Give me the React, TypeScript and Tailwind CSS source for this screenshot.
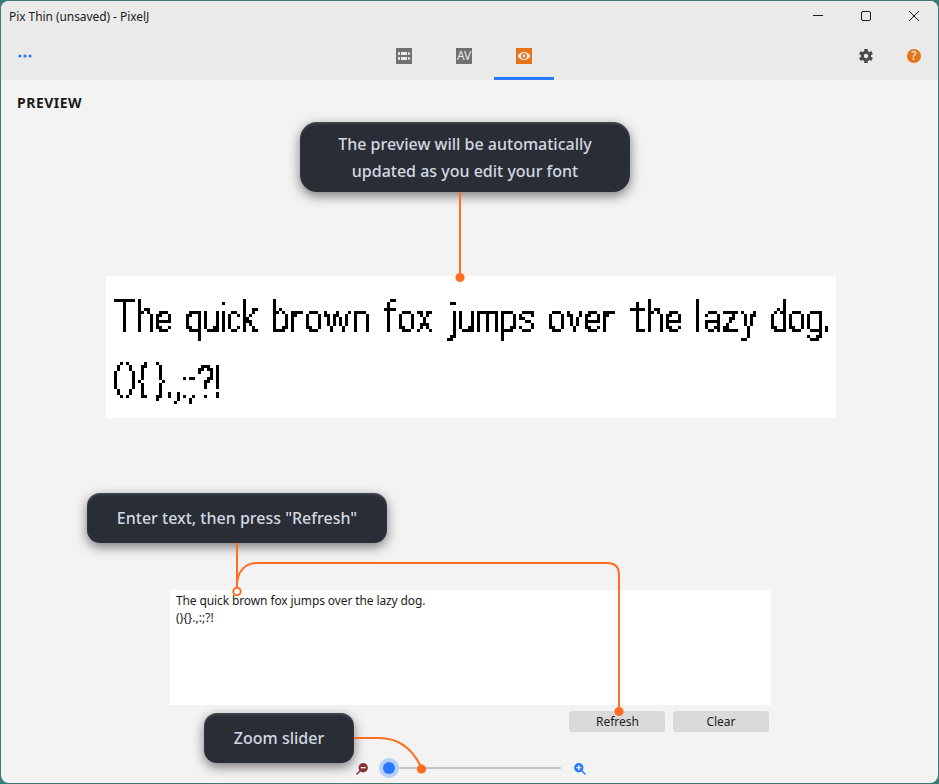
import React from "react";

type Word = { text: string; x: number[] };

const LINES: { y: number; words: Word[] }[] = [
  {
    y: 56,
    words: [
      { text: "The", x: [8, 32, 50] },
      { text: "quick", x: [80, 98, 116, 122, 137] },
      { text: "brown", x: [167, 185, 200, 218, 248] },
      { text: "fox", x: [278, 293, 311] },
      { text: "jumps", x: [341, 353, 371, 395, 413] },
      { text: "over", x: [443, 461, 479, 497] },
      { text: "the", x: [524, 542, 560] },
      { text: "lazy", x: [590, 599, 617, 635] },
      { text: "dog.", x: [665, 683, 701, 719] },
    ],
  },
  {
    y: 122,
    words: [{ text: "(){}.,:;?!", x: [8, 20, 32, 49, 62, 68, 77, 83, 92, 110] }],
  },
];

// Drawn width of each glyph; the others are 15 units wide.
const WIDTH: Record<string, number> = {
  T: 21, i: 3, c: 12, r: 11, w: 27, f: 12, j: 9, m: 21, l: 3, h: 14, n: 14, u: 14,
  "(": 9, ")": 9, "{": 10, "}": 10, ".": 3, ",": 5, ":": 3, ";": 5, "!": 3,
};

// Font size of each glyph; the others are set at 41.
const SIZE: Record<string, number> = {
  T: 46, l: 45, h: 43, b: 43, d: 43, k: 43, f: 44, t: 45, i: 42, j: 42,
  "(": 37, ")": 37, "{": 40, "}": 40, "?": 46, "!": 46, ".": 46, ",": 46, ":": 42, ";": 42,
};

// Baseline shift of the brackets.
const RISE: Record<string, number> = { "(": 7, ")": 7, "{": 5, "}": 5 };

const ruler = document.createElement("canvas").getContext("2d")!;

function fit(ch: string, left: number, baseline: number) {
  const size = SIZE[ch] ?? 41;
  ruler.font = `${size * 10}px Roboto`;
  const m = ruler.measureText(ch);
  const ink = (m.actualBoundingBoxRight + m.actualBoundingBoxLeft) / 10;
  const scale = ((WIDTH[ch] ?? 15) + 0.2) / ink;
  return {
    fontSize: size,
    x: left - 0.1 + (m.actualBoundingBoxLeft / 10) * scale,
    y: baseline - (RISE[ch] ?? 0),
    textLength: (m.width / 10) * scale,
  };
}

function PixelPreview() {
  return (
    <svg className="block h-[142px] w-[730px] bg-white" viewBox="0 0 730 142">
      <defs>
        <filter id="pixels" filterUnits="userSpaceOnUse" x="2" y="2" width="726" height="138" colorInterpolationFilters="sRGB">
          <feComponentTransfer in="SourceGraphic" result="solid">
            <feFuncA type="discrete" tableValues="0 0 1 1 1" />
          </feComponentTransfer>
          <feFlood x="3" y="3" width="1" height="1" floodColor="#000" result="dot" />
          <feOffset in="dot" dx="0" dy="0" x="2" y="2" width="3" height="3" result="cell" />
          <feTile in="cell" result="grid" />
          <feComposite in="solid" in2="grid" operator="in" />
          <feMorphology operator="dilate" radius="1" />
        </filter>
      </defs>
      <g filter="url(#pixels)" className="font-['Roboto',sans-serif]" textRendering="geometricPrecision">
        {LINES.map((line) =>
          line.words.map((word) => (
            <text key={word.text} y={line.y}>
              {word.text.split("").map((ch, i) => (
                <tspan key={i} lengthAdjust="spacingAndGlyphs" {...fit(ch, word.x[i], line.y)}>
                  {ch}
                </tspan>
              ))}
            </text>
          )),
        )}
      </g>
    </svg>
  );
}

function TitleBar() {
  return (
    <div className="flex h-8 shrink-0 items-center justify-between pl-2">
      <span className="text-[12px] leading-4 tracking-[-0.07px] text-[#1b1b1b]">Pix Thin (unsaved) - PixelJ</span>
      <svg width="144" height="32" viewBox="0 0 144 32" fill="none" stroke="#1b1b1b" strokeWidth="1">
        <path d="M19 14.500h10" />
        <rect x="67.500" y="10.500" width="9" height="9" rx="1.500" />
        <path d="M115 10l10 10M125 10l-10 10" />
      </svg>
    </div>
  );
}

function Toolbar() {
  return (
    <div className="grid h-[47px] shrink-0 grid-cols-[373px_180px_1fr]">
      <div className="flex items-center pb-[2px] pl-[17px]">
        <svg width="15" height="4" viewBox="0 0 15 4" fill="#2979ff">
          <circle cx="2" cy="2" r="1.600" />
          <circle cx="7" cy="2" r="1.600" />
          <circle cx="12" cy="2" r="1.600" />
        </svg>
      </div>
      <div className="grid grid-cols-3">
        <div className="flex items-center justify-center pb-[2px]">
          <svg width="16" height="16" viewBox="0 0 16 16">
            <path fill="#707070" d="M0 0h16v16H0z" />
            <path fill="#eaeaea" d="M2 4h2v3H2zM5 4h6v3H5zM12 4l3 1.500L12 7zM2 9h2v3H2zM5 9h6v3H5zM12 9l3 1.500-3 1.500z" />
          </svg>
        </div>
        <div className="flex items-center justify-center pb-[2px]">
          <span className="flex size-4 items-center justify-center bg-[#707070] text-[12px] leading-4 tracking-[-0.3px] text-[#eaeaea]">AV</span>
        </div>
        <div className="flex items-center justify-center border-b-[3px] border-[#2979ff] pt-[1px]">
          <svg width="16" height="16" viewBox="0 0 16 16">
            <path fill="#e77518" d="M0 0h16v16H0z" />
            <path fill="#eaeaea" d="M1.500 8C3 5.300 5.300 4 8 4s5 1.300 6.500 4c-1.500 2.700-3.800 4-6.500 4S3 10.700 1.500 8z" />
            <circle cx="8" cy="8" r="2.200" fill="#eaeaea" stroke="#e77518" strokeWidth="1.600" />
          </svg>
        </div>
      </div>
      <div className="flex items-center justify-end gap-[33px] pb-[2px] pr-[17px]">
        <svg width="16" height="16" viewBox="0 0 16 16">
          <g fill="#4c4c4f">
            <path d="M6.200 1h3.600v14H6.200z" />
            <path d="M6.200 1h3.600v14H6.200z" transform="rotate(60 8 8)" />
            <path d="M6.200 1h3.600v14H6.200z" transform="rotate(120 8 8)" />
            <circle cx="8" cy="8" r="5.200" />
          </g>
          <circle cx="8" cy="8" r="2.200" fill="#eaeaea" />
        </svg>
        <span className="flex size-[14px] items-center justify-center rounded-full bg-[#e77518] text-[12px] leading-[14px] font-medium text-[#eaeaea]">?</span>
      </div>
    </div>
  );
}

function ZoomIcon({ plus }: { plus?: boolean }) {
  const color = plus ? "#2979ff" : "#8c2f39";
  return (
    <svg width="12" height="12" viewBox="0 0 12 12" className={plus ? "mt-[2px]" : "mt-[2px] -scale-x-100"}>
      <circle cx="4.800" cy="4.800" r="4.700" fill={color} />
      <path d="M7.500 7.500l4 4" stroke={color} strokeWidth="1.400" />
      <path d={plus ? "M2.300 4.700h5M4.800 2.200v5" : "M2.300 4.700h5"} stroke="#f3f3f3" strokeWidth="1.300" />
    </svg>
  );
}

function Slider() {
  return (
    <div className="flex h-5 items-center">
      <ZoomIcon />
      <div className="ml-[11px] flex h-5 w-[182px] items-center">
        <span className="flex size-5 items-center justify-center rounded-full bg-[#b8d0f8]">
          <span className="size-3 rounded-full bg-[#2979ff]" />
        </span>
        <span className="h-0.5 flex-1 rounded-full bg-[#c4c4c4]" />
      </div>
      <div className="ml-[13px]">
        <ZoomIcon plus />
      </div>
    </div>
  );
}

const CALLOUT =
  "absolute flex items-center justify-center bg-[#292d36] text-center text-[16px] leading-[27px] font-medium text-[#d3d8e0] shadow-[0_4px_12px_rgba(0,0,0,0.5),inset_0_2px_2px_rgba(255,255,255,0.12)]";

function Annotations() {
  return (
    <>
      <div className={`${CALLOUT} left-[300px] top-[122px] h-[70px] w-[330px] rounded-[17px]`}>
        <span className="mt-0.5">
          The preview will be automatically
          <br />
          updated as you edit your font
        </span>
      </div>
      <div className={`${CALLOUT} left-[87px] top-[493px] h-[50px] w-[300px] rounded-[13px]`}>
        Enter text, then press "Refresh"
      </div>
      <div className={`${CALLOUT} left-[204px] top-[713px] h-[50px] w-[150px] rounded-[13px]`}>Zoom slider</div>
      <svg className="absolute inset-0" width="939" height="784" viewBox="0 0 939 784" fill="none" stroke="#ff6d1f" strokeWidth="2">
        <path d="M460 192v86M237 543v44M237 587v-2c0-13 8-22 20-22h350q12 0 12 12v137M354 738h25c20 0 34 11 43 31" />
        <circle cx="237" cy="591.500" r="3.700" fill="white" />
        <g fill="#ff6d1f" stroke="none">
          <circle cx="460" cy="277.500" r="4.600" />
          <circle cx="619" cy="711.500" r="4.600" />
          <circle cx="421.500" cy="769" r="4.600" />
        </g>
      </svg>
    </>
  );
}

export default function App() {
  return (
    <div className="relative h-[784px] w-[939px] bg-[#3b7c75] p-px font-['Noto_Sans',sans-serif] text-[#1b1b1b]">
      <div className="flex h-[782px] w-[937px] flex-col overflow-hidden rounded-[8px] bg-[#f3f3f3]">
        <header className="flex shrink-0 flex-col bg-[#eaeaea]">
          <TitleBar />
          <Toolbar />
        </header>
        <main className="flex flex-1 flex-col">
          <h1 className="h-[196px] pl-4 pt-[13px] text-[14px] leading-[20px] font-bold tracking-[0.5px]">PREVIEW</h1>
          <div className="ml-[105px]">
            <PixelPreview />
          </div>
          <div className="ml-[169px] mt-[172px] h-[115px] w-[601px] bg-white px-1.5 pt-[2px] text-[12px] leading-[17px]">
            <span className="tracking-[-0.115px]">The quick brown fox jumps over the lazy dog.</span>
            <br />
            {"(){}.,:;?!"}
          </div>
          <div className="ml-[568px] mt-1.5 flex gap-2 text-[12px]">
            <button className="h-[21px] w-24 rounded-[3px] bg-[#dadada] pl-px leading-[21px]">Refresh</button>
            <button className="h-[21px] w-24 rounded-[3px] bg-[#dadada] leading-[21px]">Clear</button>
          </div>
          <div className="ml-[355px] mt-[26px]">
            <Slider />
          </div>
        </main>
      </div>
      <Annotations />
    </div>
  );
}
